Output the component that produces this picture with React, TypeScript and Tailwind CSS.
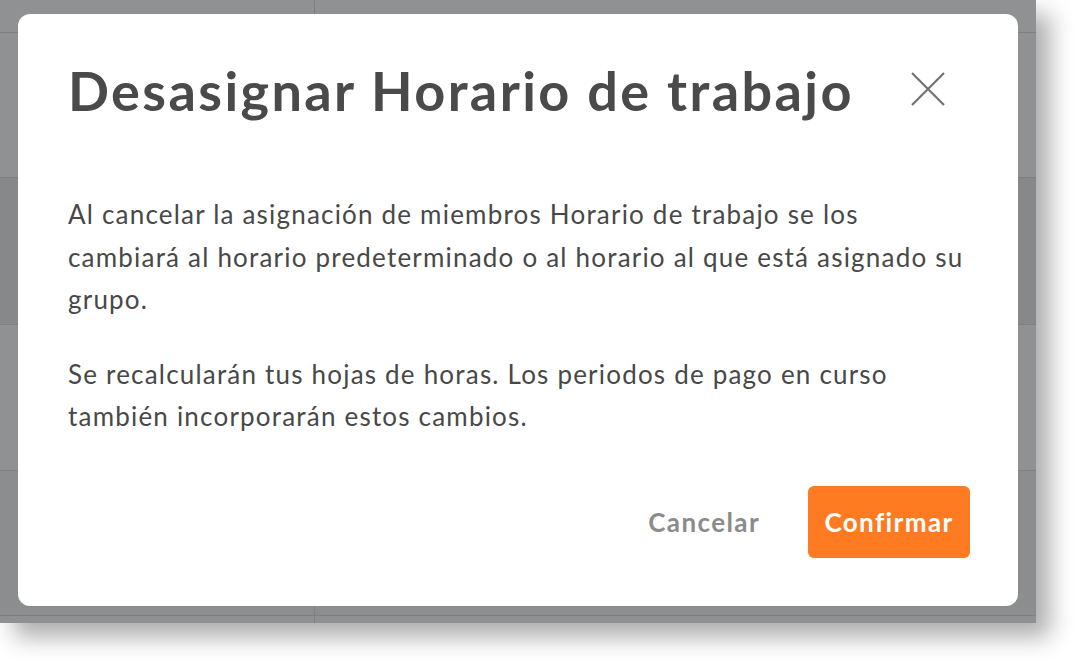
import React from "react";

const rows = [
  { h: "h-[33px]", bg: "bg-[#909193]" },
  { h: "h-[145px]", bg: "bg-[#909193]" },
  { h: "h-[147px]", bg: "bg-[#87888a]" },
  { h: "h-[146px]", bg: "bg-[#909193]" },
  { h: "h-[145px]", bg: "bg-[#8c8d8f]" },
  { h: "h-[7px]", bg: "bg-[#8f9092]" },
];

export default function App() {
  return (
    <div className="w-[1076px] h-[664px] bg-white overflow-hidden">
      <div className="relative w-[1036px] h-[623px] shadow-[14px_14px_22px_rgba(0,0,0,0.32)]">
        <div className="flex flex-col h-full">
          {rows.map((r, i) => (
            <div
              key={i}
              className={`${r.h} ${r.bg} ${i < rows.length - 1 ? "border-b border-[#7f8082]" : ""} grid grid-cols-[315px_1fr] shrink-0`}
            >
              <div className="border-r border-[#7f8082]" />
              <div />
            </div>
          ))}
        </div>

        <div
          className="absolute left-[18px] top-[14px] w-[1000px] h-[592px] bg-white rounded-[12px] flex flex-col pl-[50px] pr-[48px] pt-[48px] pb-[48px]"
          style={{ fontFamily: "Lato, 'Noto Sans', sans-serif" }}
        >
          <div className="flex items-start justify-between">
            <h1 className="text-[54px] leading-[80px] font-bold text-[#4a4a4a] mt-[-11px] tracking-[2.4px] whitespace-nowrap">
              Desasignar Horario de trabajo
            </h1>
            <button className="mt-[10px] mr-[25px] w-[34px] h-[34px] flex items-center justify-center text-[#737373] shrink-0">
              <svg width="34" height="34" viewBox="0 0 34 34" fill="none" stroke="currentColor" strokeWidth="2.2">
                <path d="M1 1 L33 33 M33 1 L1 33" />
              </svg>
            </button>
          </div>

          <div className="mt-[62px] text-[26px] leading-[42.5px] text-[#484848] tracking-[1.2px]">
            <p>
              <span className="block whitespace-nowrap">Al cancelar la asignación de miembros Horario de trabajo se los</span>
              <span className="block whitespace-nowrap">cambiará al horario predeterminado o al horario al que está asignado su</span>
              <span className="block whitespace-nowrap">grupo.</span>
            </p>
            <p className="mt-[32px]">
              <span className="block whitespace-nowrap">Se recalcularán tus hojas de horas. Los periodos de pago en curso</span>
              <span className="block whitespace-nowrap">también incorporarán estos cambios.</span>
            </p>
          </div>

          <div className="mt-auto flex items-center justify-end gap-[48px]">
            <button className="text-[26px] font-bold text-[#8b8b8b] tracking-[1.4px]">Cancelar</button>
            <button className="w-[162px] h-[72px] rounded-[6px] bg-[#ff7b22] text-white text-[26px] font-bold tracking-[1.4px]">
              Confirmar
            </button>
          </div>
        </div>
      </div>
    </div>
  );
}
